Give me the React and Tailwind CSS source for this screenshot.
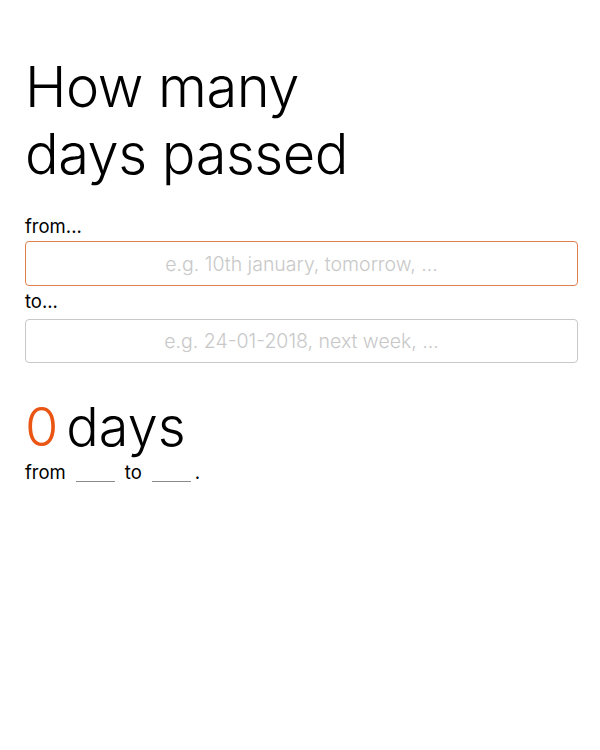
export default function App() {
  return (
    <div className="min-h-[750px] bg-white pl-[25px] pr-[22px] pt-[54px]" style={{ fontFamily: "Inter, 'Noto Sans', sans-serif" }}>
      <h1 className="text-[56px] font-light leading-[67px] text-black tracking-[-0.5px]">
        How many<br />days passed
      </h1>
      <div className="mt-[27px] text-[18.5px] leading-[22px] text-black font-normal">from...</div>
      <input
        className="mt-[4px] block h-[45px] w-full rounded-[4px] border border-[#e0804f] bg-white text-center text-[19.5px] font-light text-black outline-none placeholder:text-[#c8c8c8]"
        placeholder="e.g. 10th january, tomorrow, ..."
      />
      <div className="mt-[4px] text-[18.5px] leading-[22px] text-black font-normal">to...</div>
      <input
        className="mt-[7px] block h-[44px] w-full rounded-[4px] border border-[#c8c8c8] bg-white text-center text-[19.5px] font-light text-black outline-none placeholder:text-[#c8c8c8]"
        placeholder="e.g. 24-01-2018, next week, ..."
      />
      <div className="mt-[33px] flex items-baseline text-[54px] font-light leading-[62px]">
        <span className="text-[#ea5514]">0</span>
        <span className="ml-[8px] text-black">days</span>
      </div>
      <div className="mt-[2px] flex items-baseline text-[18.5px] font-normal leading-[24px] text-black">
        <span>from</span>
        <span className="mx-[10px] inline-block w-[39px] border-b border-[#8a8a8a] translate-y-[3px]"></span>
        <span>to</span>
        <span className="ml-[10px] mr-[4px] inline-block w-[39px] border-b border-[#8a8a8a] translate-y-[3px]"></span>
        <span>.</span>
      </div>
    </div>
  );
}
